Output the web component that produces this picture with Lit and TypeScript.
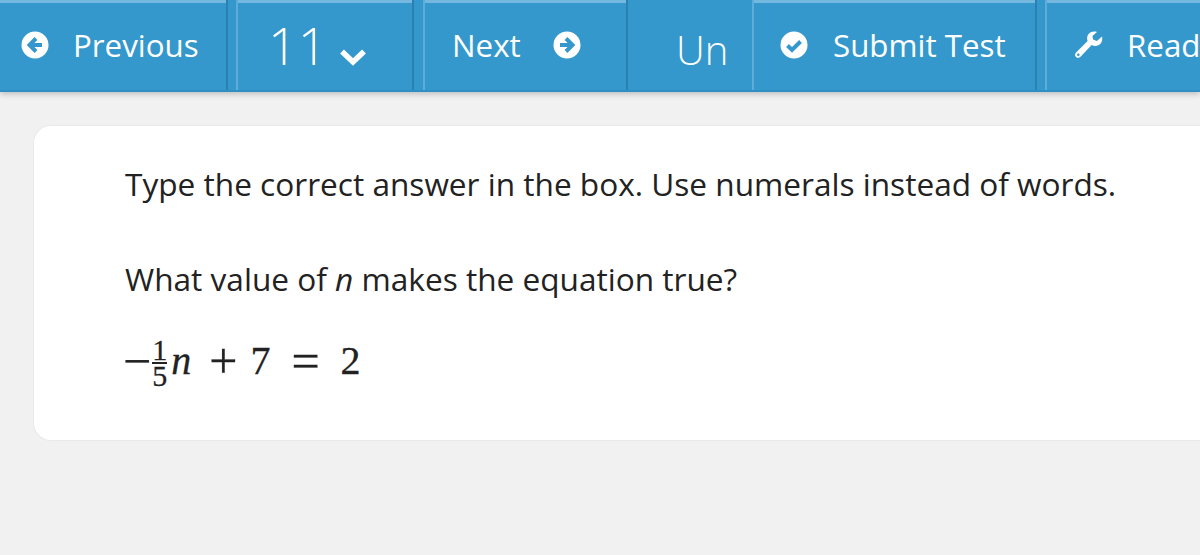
import { LitElement, css, html, svg } from 'lit';
import { customElement } from 'lit/decorators.js';

const BLUE = '#3498cc';

const arrowLeft = html`<svg class="ico" viewBox="0 0 28 28">
  <circle cx="14" cy="14" r="13.5" fill="#fff"></circle>
  ${svg`<path d="M15 7.500 8.500 14l6.500 6.500M9.500 14H21" fill="none" stroke="${BLUE}" stroke-width="4"></path>`}
</svg>`;

const arrowRight = html`<svg class="ico" viewBox="0 0 28 28">
  <circle cx="14" cy="14" r="13.5" fill="#fff"></circle>
  ${svg`<path d="M13 7.500 19.500 14 13 20.500M18.500 14H7" fill="none" stroke="${BLUE}" stroke-width="4"></path>`}
</svg>`;

const check = html`<svg class="ico" viewBox="0 0 28 28">
  <circle cx="14" cy="14" r="13.5" fill="#fff"></circle>
  ${svg`<path d="M7.500 14.500 12 19l8.500-8.500" fill="none" stroke="${BLUE}" stroke-width="4"></path>`}
</svg>`;

const chevron = html`<svg class="chev" viewBox="0 0 28 20">
  <path d="M3 5.500 14 16 25 5.500" fill="none" stroke="#fff" stroke-width="5.500"></path>
</svg>`;

const wrench = html`<svg class="wrench" viewBox="0 0 30 28">
  <path
    d="M29 5.500c.9 3.800-.6 7.300-3.700 8.800-2.300 1.100-4.700.9-6.600-.2L7.500 25.800c-1.300 1.300-3.300 1.400-4.500.2-1.300-1.300-1.200-3.200.1-4.500L14.600 10c-.8-2.100-.7-4.600.6-6.500C17 .9 20.400-.1 24 1l-4.600 3.900.7 3.700 3.800 1.300z"
    fill="#fff"
  ></path>
  <circle cx="5.300" cy="23.700" r="1.300" fill="${BLUE}"></circle>
</svg>`;

@customElement('app-root')
export class AppRoot extends LitElement {
  static override styles = css`
    :host {
      display: flex;
      flex-direction: column;
      height: 555px;
      overflow: hidden;
      background: #f1f1f1;
      font-family: 'Open Sans', sans-serif;
      color: #222;
    }

    .bar {
      display: flex;
      flex: none;
      box-sizing: border-box;
      height: 92px;
      background: #3498cc;
      border-bottom: 2px solid #2f8fc2;
      box-shadow: 0 2px 6px rgba(0, 0, 0, 0.22);
      color: #fff;
      overflow: hidden;
    }

    .btn {
      display: flex;
      flex: none;
      align-items: center;
      box-sizing: border-box;
      height: 100%;
      padding-bottom: 4px;
      border-top: 3px solid #74b8e0;
      font-size: 31.300px;
      font-weight: 400;
      white-space: nowrap;
    }

    .sep {
      flex: none;
      box-sizing: border-box;
      height: 100%;
      border-left: 2px solid #2b80b2;
      border-right: 2px solid #5fabd9;
    }

    .ico {
      flex: none;
      width: 28px;
      height: 28px;
    }

    .prev {
      width: 226px;
      padding-left: 21px;
      gap: 24px;
    }
    .s1 {
      width: 12px;
    }
    .page {
      width: 174px;
      padding-left: 30px;
      gap: 12px;
      font-size: 52px;
      font-weight: 300;
    }
    .chev {
      width: 28px;
      height: 20px;
      margin-top: 22px;
    }
    .s2 {
      width: 13px;
    }
    .next {
      width: 201px;
      padding-left: 27px;
      gap: 32px;
    }
    .un {
      width: 128px;
      padding: 8px 0 0 48px;
      border-top: none;
      border-left: 2px solid #2b80b2;
      border-right: 2px solid #5fabd9;
      font-size: 40px;
      font-weight: 300;
    }
    .submit {
      width: 281px;
      padding-left: 26px;
      gap: 25px;
    }
    .s3 {
      width: 12px;
    }
    .read {
      flex: 1;
      padding-left: 26px;
      gap: 24px;
    }
    .wrench {
      flex: none;
      width: 30px;
      height: 28px;
    }

    .card {
      flex: none;
      box-sizing: border-box;
      width: 1200px;
      height: 316px;
      margin: 33px 0 0 33px;
      padding: 34px 0 0 91px;
      background: #fff;
      border: 1px solid #e9e9e9;
      border-right: none;
      border-radius: 18px 0 0 18px;
      font-size: 31.600px;
      line-height: 48px;
      white-space: nowrap;
    }

    .card p {
      margin: 0;
    }

    .card p + p {
      margin-top: 47px;
    }

    .math {
      display: flex;
      align-items: center;
      height: 64px;
      margin: 26px 0 0 -2px;
      font-family: 'Liberation Serif', serif;
      font-size: 40px;
      line-height: 1;
      color: #222;
      -webkit-text-stroke: 0.3px #222;
    }

    .op {
      font-size: 50px;
    }

    .frac {
      display: flex;
      flex-direction: column;
      align-items: center;
      width: 15px;
      margin: 4px 4px 0 1px;
      font-size: 30px;
      line-height: 24px;
    }

    .frac span:first-child {
      border-bottom: 2px solid #222;
      width: 100%;
      text-align: center;
    }

    .near {
      margin-left: 13px;
    }

    .gap {
      margin-left: 18px;
    }

    .wide {
      margin-left: 21px;
    }
  `;

  protected override render() {
    return html`
      <nav class="bar">
        <div class="btn prev">${arrowLeft}<span>Previous</span></div>
        <div class="sep s1"></div>
        <div class="btn page"><span>11</span>${chevron}</div>
        <div class="sep s2"></div>
        <div class="btn next"><span>Next</span>${arrowRight}</div>
        <div class="btn un"><span>Un</span></div>
        <div class="btn submit">${check}<span>Submit Test</span></div>
        <div class="sep s3"></div>
        <div class="btn read">${wrench}<span>Read</span></div>
      </nav>
      <main class="card">
        <p>Type the correct answer in the box. Use numerals instead of words.</p>
        <p>What value of <i>n</i> makes the equation true?</p>
        <div class="math">
          <span class="op">−</span>
          <span class="frac"><span>1</span><span>5</span></span>
          <i>n</i>
          <span class="op gap">+</span>
          <span class="near">7</span>
          <span class="op wide">=</span>
          <span class="wide">2</span>
        </div>
      </main>
    `;
  }
}
